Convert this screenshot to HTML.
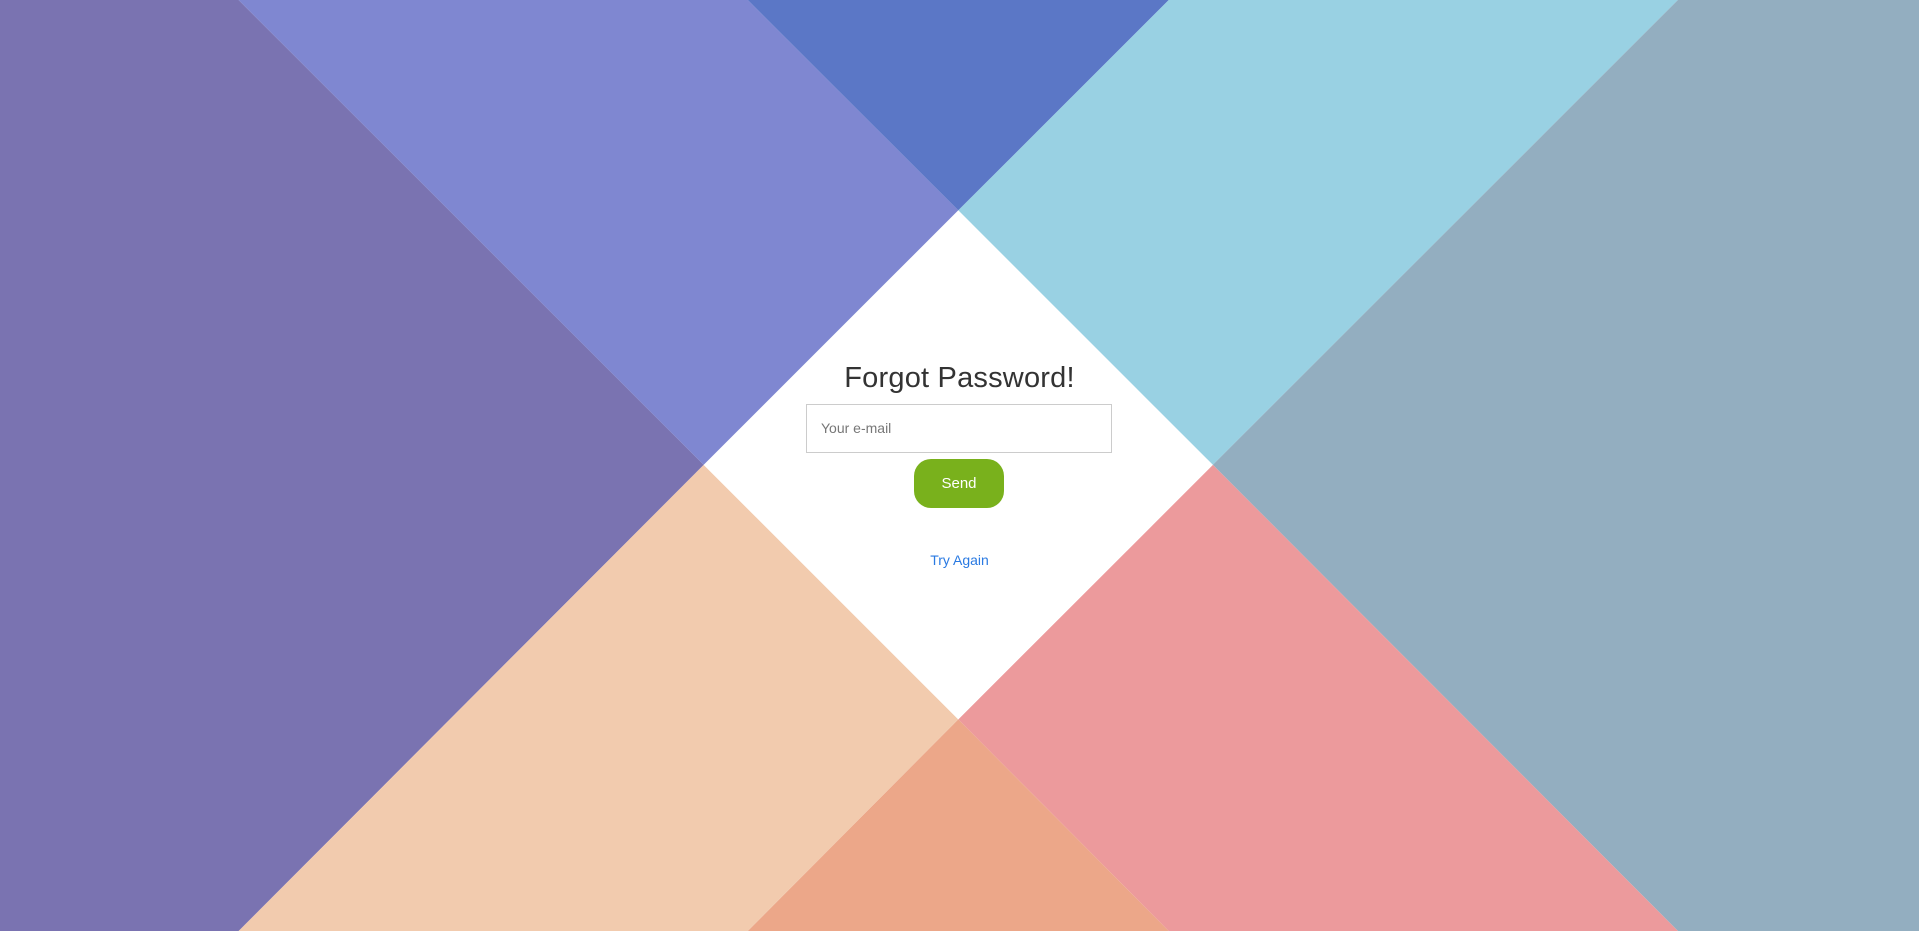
<!DOCTYPE html>
<html><head><meta charset="utf-8"><style>
html,body{margin:0;padding:0;width:1919px;height:931px;overflow:hidden;background:#fff;font-family:"Liberation Sans",sans-serif}
svg{position:absolute;left:0;top:0}
.t{position:absolute;left:0;width:1919px;text-align:center;top:362px;font-size:29px;color:#333;font-weight:normal;letter-spacing:0.2px}
.in{position:absolute;left:806px;top:404px;width:304px;height:47px;border:1px solid #ccc;background:#fff}
.in span{position:absolute;left:14px;top:15px;font-size:14px;color:#777}
.btn{position:absolute;left:914px;top:459px;width:90px;height:49px;border-radius:17px;background:#79b11c;color:#fff;font-size:15px;text-align:center;line-height:49px}
.lk{position:absolute;left:0;width:1919px;text-align:center;top:552px;font-size:14px;color:#2a7ae2}
</style></head><body>
<svg width="1919" height="931" viewBox="0 0 1568 761" preserveAspectRatio="none">
<polygon points="0,0 195,0 575,380 195,761 0,761" fill="#7a73b1"/>
<polygon points="195,0 611,0 783,172 575,380" fill="#7f87d1"/>
<polygon points="611,0 955,0 783,172" fill="#5b77c6"/>
<polygon points="955,0 1371,0 991,380 783,172" fill="#99d1e3"/>
<polygon points="1371,0 1568,0 1568,761 1371,761 991,380" fill="#93aec0"/>
<polygon points="991,380 1371,761 955,761 783,588" fill="#ec9a9c"/>
<polygon points="783,588 955,761 611,761" fill="#eca789"/>
<polygon points="575,380 783,588 611,761 195,761" fill="#f2cbae"/>
<polygon points="783,172 991,380 783,588 575,380" fill="#fff"/>
</svg>
<div class="t">Forgot Password!</div>
<div class="in"><span>Your e-mail</span></div>
<div class="btn">Send</div>
<div class="lk">Try Again</div>
</body></html>
